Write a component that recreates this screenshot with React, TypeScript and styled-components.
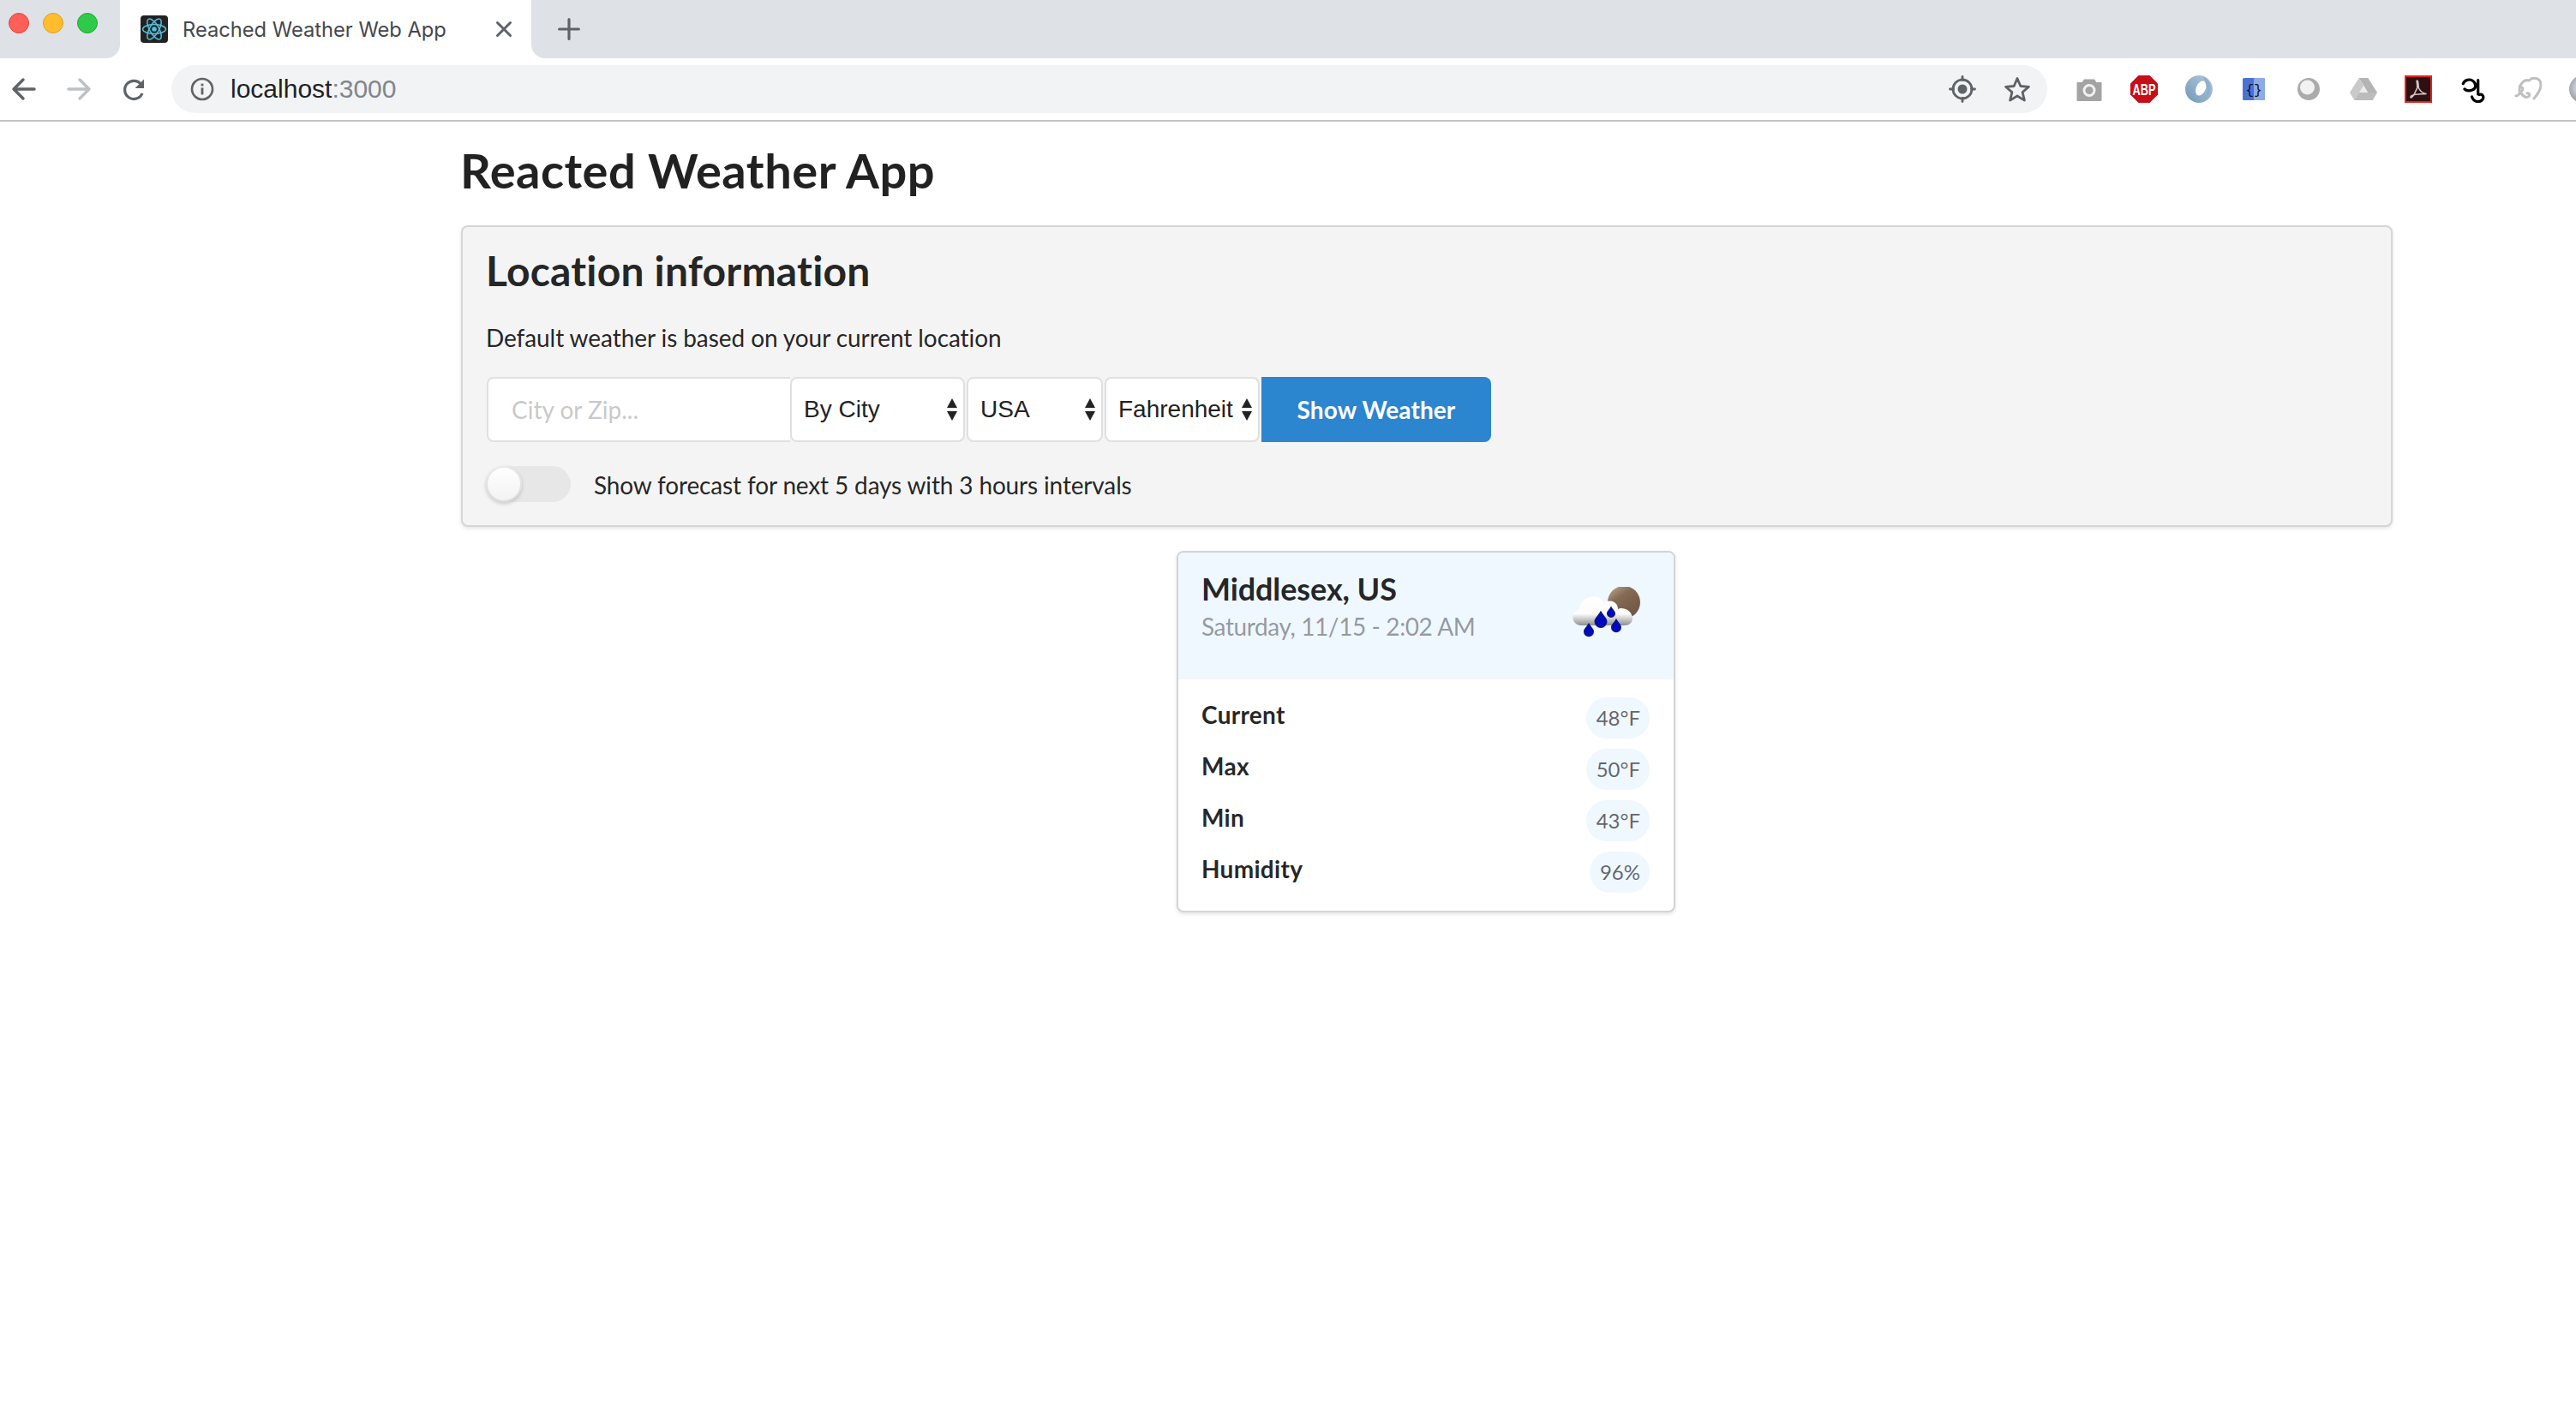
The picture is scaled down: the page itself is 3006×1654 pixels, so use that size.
import React from 'react';
import styled, { createGlobalStyle } from 'styled-components';

const GlobalStyle = createGlobalStyle`
	html, body {
		margin: 0;
		padding: 0;
		background: #ffffff;
		overflow: hidden;
	}
	* {
		box-sizing: border-box;
	}
`;

const Page = styled.div`
	width: 3006px;
	height: 1654px;
	overflow: hidden;
	background: #ffffff;
	font-family: Lato, "Open Sans", sans-serif;
	color: rgba(0, 0, 0, 0.87);
`;

const TabStrip = styled.div`
	display: flex;
	height: 68px;
`;

const WindowControls = styled.div`
	display: flex;
	flex: none;
	width: 140px;
	gap: 16px;
	padding: 15px 0 0 10px;
	background: #dee1e6;
	border-bottom-right-radius: 16px;
`;

const Light = styled.span<{ $fill: string; $edge: string }>`
	width: 24px;
	height: 24px;
	border-radius: 50%;
	background: ${p => p.$fill};
	border: 1px solid ${p => p.$edge};
`;

const Tab = styled.div`
	display: flex;
	flex: none;
	align-items: center;
	width: 480px;
	padding: 0 20px 0 24px;
	background: #ffffff;
	border-radius: 16px 16px 0 0;
`;

const TabTitle = styled.span`
	margin-left: 17px;
	font-family: Inter, "Liberation Sans", sans-serif;
	font-size: 23.7px;
	color: #45474b;
	white-space: nowrap;
	flex: 1;
`;

const StripFill = styled.div`
	display: flex;
	flex: 1;
	align-items: center;
	padding-left: 30px;
	background: #dee1e6;
	border-bottom-left-radius: 16px;
`;

const Toolbar = styled.div`
	display: flex;
	align-items: center;
	height: 74px;
	padding-left: 12px;
	border-bottom: 2px solid #c4c4c4;
`;

const NavIcons = styled.div`
	display: flex;
	flex: none;
	gap: 32px;
	& > svg:last-child {
		margin-left: 1px;
	}
`;

const Omnibox = styled.div`
	display: flex;
	flex: none;
	align-items: center;
	width: 2189px;
	height: 56px;
	margin-left: 27px;
	padding: 0 3px 0 20px;
	background: #f1f3f4;
	border-radius: 28px;
`;

const UrlText = styled.span`
	flex: 1;
	margin-left: 17px;
	font-family: "Liberation Sans", Arial, sans-serif;
	font-size: 30px;
	color: #202124;
`;

const UrlPort = styled.span`
	color: #80868b;
`;

const IconSlot = styled.div`
	display: flex;
	flex: none;
	align-items: center;
	justify-content: center;
	width: 64px;
`;

const Extensions = styled.div`
	display: flex;
	flex: none;
	margin-left: 17px;
`;

const Container = styled.main`
	width: 2254px;
	margin-left: 538px;
`;

const PageTitle = styled.h1`
	margin: 21px 0 28px -1px;
	font-size: 56px;
	font-weight: 700;
	line-height: 72px;
	letter-spacing: 0.5px;
	color: rgba(0, 0, 0, 0.87);
`;

const Segment = styled.section`
	padding: 20px 28px 27px;
	background: #f4f4f4;
	border: 2px solid #d6d6d6;
	border-radius: 8px;
	box-shadow: 0 2px 4px rgba(34, 36, 38, 0.12);
`;

const SegmentTitle = styled.h2`
	margin: 0 0 27px -1px;
	font-size: 48px;
	font-weight: 700;
	line-height: 62px;
	letter-spacing: 0.2px;
`;

const Paragraph = styled.p`
	margin: 0 0 26px -1px;
	font-size: 28px;
	line-height: 40px;
	letter-spacing: -0.08px;
`;

const InputGroup = styled.div`
	display: flex;
	height: 76px;
`;

const CityInput = styled.input`
	width: 354px;
	padding: 0 27px;
	background: #ffffff;
	border: 2px solid #e0e0e0;
	border-right: 0;
	border-radius: 8px 0 0 8px;
	font-family: Lato, sans-serif;
	font-size: 28px;
	outline: none;
	&::placeholder {
		color: rgba(191, 191, 191, 0.87);
		opacity: 1;
	}
`;

const Select = styled.div<{ $width: number }>`
	display: flex;
	align-items: center;
	justify-content: space-between;
	width: ${p => p.$width}px;
	margin-right: 2px;
	padding: 0 6px 0 14px;
	background: #ffffff;
	border: 2px solid #e0e0e0;
	border-radius: 8px;
	font-family: "Liberation Sans", Arial, sans-serif;
	font-size: 28px;
	color: #222222;
`;

const ShowButton = styled.button`
	width: 268px;
	padding: 0;
	background: #2b85cf;
	border: 0;
	border-radius: 0 8px 8px 0;
	font-family: Lato, sans-serif;
	font-size: 28px;
	font-weight: 700;
	letter-spacing: 0.1px;
	color: #ffffff;
`;

const ToggleRow = styled.div`
	display: flex;
	align-items: center;
	margin-top: 28px;
	font-size: 28px;
	line-height: 40px;
	letter-spacing: -0.15px;
`;

const Toggle = styled.span`
	position: relative;
	flex: none;
	width: 99px;
	height: 42px;
	margin: 0 27px 0 -1px;
	background: rgba(0, 0, 0, 0.05);
	border-radius: 21px;
`;

const ToggleKnob = styled.span`
	position: absolute;
	top: 0;
	left: 0;
	width: 42px;
	height: 42px;
	background: linear-gradient(transparent, rgba(0, 0, 0, 0.05)), #ffffff;
	border-radius: 50%;
	box-shadow: 0 2px 4px rgba(34, 36, 38, 0.2), 0 0 0 2px rgba(34, 36, 38, 0.1) inset;
`;

const ToggleLabel = styled.span`
	padding-top: 2px;
`;

const CardRow = styled.div`
	display: flex;
	justify-content: center;
	margin-top: 28px;
	padding-right: 2px;
`;

const Card = styled.article`
	width: 582px;
	background: #ffffff;
	border: 2px solid #d4d4d5;
	border-radius: 8px;
	box-shadow: 0 2px 4px rgba(34, 36, 38, 0.12);
	overflow: hidden;
`;

const CardHeader = styled.header`
	display: flex;
	justify-content: space-between;
	height: 148px;
	padding: 19px 33px 0 27px;
	background: #eff7ff;
	border-bottom: 2px solid #f3f6f9;
`;

const CardTitle = styled.div`
	font-size: 36px;
	font-weight: 700;
	line-height: 46px;
	letter-spacing: -0.1px;
`;

const CardMeta = styled.div`
	margin-top: 1px;
	font-size: 28px;
	line-height: 40px;
	letter-spacing: -0.4px;
	color: rgba(0, 0, 0, 0.4);
`;

const WeatherIcon = styled.svg`
	flex: none;
	margin-top: 21px;
`;

const CardBody = styled.div`
	display: flex;
	flex-direction: column;
	gap: 12px;
	padding: 21px 28px 21px 27px;
`;

const StatRow = styled.div`
	display: flex;
	justify-content: space-between;
	align-items: flex-start;
	height: 48px;
`;

const StatName = styled.span`
	font-size: 28px;
	font-weight: 700;
	line-height: 40px;
	letter-spacing: 0.3px;
`;

const StatValue = styled.span`
	height: 48px;
	padding: 0 11px 0 12px;
	background: #eff7ff;
	border-radius: 24px;
	font-size: 24px;
	line-height: 48px;
	color: rgba(0, 0, 0, 0.6);
`;

const ReactLogo = () => (
	<svg width="32" height="32" viewBox="0 0 32 32">
		<rect width="32" height="32" rx="4" fill="#222222" />
		<g fill="none" stroke="#53c1de" strokeWidth="1.5">
			<ellipse cx="16" cy="16" rx="13.5" ry="5.4" />
			<ellipse cx="16" cy="16" rx="13.5" ry="5.4" transform="rotate(60 16 16)" />
			<ellipse cx="16" cy="16" rx="13.5" ry="5.4" transform="rotate(120 16 16)" />
		</g>
		<circle cx="16" cy="16" r="2.8" fill="#53c1de" />
	</svg>
);

const Stroke = ({ d, color = '#5f6368', width = 3.4, size = 32 }: { d: string; color?: string; width?: number; size?: number }) => (
	<svg width={size} height={size} viewBox="0 0 32 32" fill="none" stroke={color} strokeWidth={width} strokeLinecap="round" strokeLinejoin="round">
		<path d={d} />
	</svg>
);

const ReloadIcon = () => (
	<svg width="32" height="32" viewBox="0 0 32 32">
		<path d="M25 21a10.6 10.6 0 1 1-1-10" fill="none" stroke="#5f6368" strokeWidth="3.2" />
		<path d="M27 4.500V15H16.500z" fill="#5f6368" />
	</svg>
);

const InfoIcon = () => (
	<svg width="32" height="32" viewBox="0 0 32 32">
		<circle cx="16" cy="16" r="12" fill="none" stroke="#5f6368" strokeWidth="2.6" />
		<rect x="14.6" y="14.4" width="2.8" height="8" fill="#5f6368" />
		<rect x="14.6" y="9.6" width="2.8" height="2.8" fill="#5f6368" />
	</svg>
);

const LocateIcon = () => (
	<svg width="32" height="32" viewBox="0 0 32 32">
		<circle cx="16" cy="16" r="11" fill="none" stroke="#5f6368" strokeWidth="2.8" />
		<circle cx="16" cy="16" r="5.5" fill="#5f6368" />
		<path d="M16 1.500v4M16 26.500v4M1.500 16h4M26.500 16h4" stroke="#5f6368" strokeWidth="2.8" strokeLinecap="round" />
	</svg>
);

const StarIcon = () => (
	<svg width="32" height="32" viewBox="0 0 32 32">
		<path d="M16 3.500l3.800 9 9.700.8-7.400 6.300 2.300 9.500-8.400-5.100-8.400 5.100 2.300-9.500-7.400-6.300 9.700-.8z" fill="none" stroke="#5f6368" strokeWidth="2.8" strokeLinejoin="round" />
	</svg>
);

const CameraIcon = () => (
	<svg width="32" height="32" viewBox="0 0 32 32">
		<path d="M2 8.500h6l2-3.500h12l2 3.500h6v21H2z" fill="#a3a3a3" stroke="#a3a3a3" strokeLinejoin="round" />
		<circle cx="16" cy="17.500" r="6" fill="none" stroke="#f1f1f1" strokeWidth="3" />
	</svg>
);

const AbpIcon = () => (
	<svg width="32" height="32" viewBox="0 0 32 32">
		<path d="M9.500 0h13L32 9.500v13L22.500 32h-13L0 22.500v-13z" fill="#c70d16" />
		<text transform="translate(16 22.500) scale(0.85 1.2)" textAnchor="middle" fontFamily="Liberation Sans" fontWeight="700" fontSize="15" fill="#ffffff">ABP</text>
	</svg>
);

const RingIcon = () => (
	<svg width="32" height="32" viewBox="0 0 32 32">
		<defs>
			<linearGradient id="ring" x1="0" y1="1" x2="1" y2="0">
				<stop offset="0" stopColor="#6f97ba" />
				<stop offset="1" stopColor="#b7cbdc" />
			</linearGradient>
		</defs>
		<circle cx="16" cy="16" r="16" fill="url(#ring)" />
		<ellipse cx="18.300" cy="15" rx="5.500" ry="9" transform="rotate(25 18.300 15)" fill="#ffffff" />
		<path d="M20 1c8 3 11 11 9 18-2 7-7 11-13 12 6-4 10-9 9-16-.5-6-3-11-5-14z" fill="#8fb0cb" />
	</svg>
);

const JsonIcon = () => (
	<svg width="26" height="26" viewBox="0 0 26 26">
		<rect width="26" height="26" rx="1.500" fill="#4a72d6" />
		<rect x="13" width="13" height="26" rx="1.500" fill="#8eabe6" />
		<text x="13" y="19" textAnchor="middle" fontFamily="Liberation Mono" fontSize="16" fill="#111111">{'{}'}</text>
	</svg>
);

const GreyOrbIcon = () => (
	<svg width="32" height="32" viewBox="0 0 32 32">
		<circle cx="16" cy="16" r="13" fill="#ababab" />
		<circle cx="14.500" cy="14" r="8.500" fill="#f2f2f2" />
	</svg>
);

const DriveIcon = () => (
	<svg width="32" height="32" viewBox="0 0 32 32">
		<path d="M16 12l5.300 8H10.700z" fill="#ececec" />
		<path d="M10.700 3L16 12 5.300 29 0 20z" fill="#c9c9c9" />
		<path d="M10.700 3h10.600L32 20H21.300z" fill="#b4b4b4" />
		<path d="M10.700 20H32l-5.300 9H5.300z" fill="#bcbcbc" />
	</svg>
);

const AcrobatIcon = () => (
	<svg width="32" height="32" viewBox="0 0 32 32">
		<rect x="1" y="1" width="30" height="30" fill="#2e0f12" stroke="#e2231a" strokeWidth="2" />
		<path d="M14.500 6c2 0 1 6 2 9 1.500 3 4 6 9 6.500-5 .5-13 0-17 2-1.500 1-2 2.500-1 2.500 2 0 4-4 7-11 1-3-1-9 0-9z" fill="none" stroke="#d8c5c5" strokeWidth="1.600" />
	</svg>
);

const KeyIcon = () => (
	<svg width="32" height="32" viewBox="0 0 32 32">
		<path d="M4.300 9.700C6 5 12 4 15 6 20 9 20 15 15 17 12 18 8 18 6 16M21.700 5.700V22M23 22.500C27 21 29 25 27 28 24 32 17 32 14.500 25" fill="none" stroke="#000000" strokeWidth="3.200" strokeLinecap="round" />
	</svg>
);

const ElephantIcon = () => (
	<svg width="32" height="32" viewBox="0 0 32 32">
		<path d="M2 24c4-1 5-3 4-7 0-6 5-13 11-11 5-5 14-3 14 5 0 7-5 12-8 16M6 13c3 0 5 2 3 5M8 21c3 4 6 5 8 4 3-1 2-5-1-4" fill="none" stroke="#bfbfbf" strokeWidth="3" strokeLinecap="round" />
	</svg>
);

const SphereIcon = () => (
	<svg width="32" height="32" viewBox="0 0 32 32">
		<defs>
			<radialGradient id="sphere" cx="0.45" cy="0.45" r="0.6">
				<stop offset="0" stopColor="#eef0f4" />
				<stop offset="1" stopColor="#8b8f96" />
			</radialGradient>
		</defs>
		<circle cx="16" cy="16" r="16" fill="url(#sphere)" />
	</svg>
);

const SelectArrows = () => (
	<svg width="14" height="26" viewBox="0 0 14 26">
		<path d="M7 0l6 11H1zM7 26L1 15h12z" fill="#222222" />
	</svg>
);

const Drop = ({ x, y, s }: { x: number; y: number; s: number }) => (
	<path d={`M${x} ${y - s * 1.5}C${x + s * 0.5} ${y - s * 0.6} ${x + s} ${y - s * 0.3} ${x + s} ${y + s * 0.2}A${s} ${s} 0 0 1 ${x - s} ${y + s * 0.2}C${x - s} ${y - s * 0.3} ${x - s * 0.5} ${y - s * 0.6} ${x} ${y - s * 1.5}z`} fill="url(#drop)" />
);

const RainCloud = () => (
	<WeatherIcon width="90" height="80" viewBox="0 0 90 80">
		<defs>
			<linearGradient id="sun" x1="0" y1="0" x2="0.7" y2="1">
				<stop offset="0" stopColor="#c4ae9b" />
				<stop offset="0.4" stopColor="#856a55" />
				<stop offset="1" stopColor="#6f5643" />
			</linearGradient>
			<linearGradient id="cloud" x1="0" y1="0" x2="0" y2="1">
				<stop offset="0" stopColor="#ffffff" />
				<stop offset="0.6" stopColor="#fbfbfb" />
				<stop offset="1" stopColor="#8f8f8f" />
			</linearGradient>
			<radialGradient id="drop" cx="0.5" cy="0.6" r="0.6">
				<stop offset="0" stopColor="#0000e0" />
				<stop offset="1" stopColor="#0a1a70" />
			</radialGradient>
			<filter id="soft" x="-10%" y="-10%" width="120%" height="120%">
				<feGaussianBlur stdDeviation="0.5" />
			</filter>
		</defs>
		<g filter="url(#soft)">
			<circle cx="65" cy="18" r="19" fill="url(#sun)" />
			<path d="M15 45C3 45 2 28 13 26 15 12 34 5 42 19 48 14 58 17 58 26 62 23 74 26 75 36 75 42 71 45 66 45z" fill="url(#cloud)" />
			<Drop x={24} y={51} s={6} />
			<Drop x={38} y={39} s={7.500} />
			<Drop x={50} y={30} s={5} />
			<Drop x={56} y={46} s={6} />
		</g>
	</WeatherIcon>
);

const stats = [
	{ name: 'Current', value: '48°F' },
	{ name: 'Max', value: '50°F' },
	{ name: 'Min', value: '43°F' },
	{ name: 'Humidity', value: '96%' },
];

const extensions = [
	<CameraIcon key="camera" />,
	<AbpIcon key="abp" />,
	<RingIcon key="ring" />,
	<JsonIcon key="json" />,
	<GreyOrbIcon key="orb" />,
	<DriveIcon key="drive" />,
	<AcrobatIcon key="acrobat" />,
	<KeyIcon key="key" />,
	<ElephantIcon key="elephant" />,
	<SphereIcon key="sphere" />,
];

const App = () => (
	<Page>
		<GlobalStyle />
		<TabStrip>
			<WindowControls>
				<Light $fill="#ff5f57" $edge="#e0443e" />
				<Light $fill="#ffbd2e" $edge="#dea123" />
				<Light $fill="#2fca49" $edge="#1fa935" />
			</WindowControls>
			<Tab>
				<ReactLogo />
				<TabTitle>Reached Weather Web App</TabTitle>
				<Stroke size={24} width={4} d="M6 6l20 20M26 6L6 26" />
			</Tab>
			<StripFill>
				<Stroke size={28} width={3.6} d="M16 3v26M3 16h26" />
			</StripFill>
		</TabStrip>
		<Toolbar>
			<NavIcons>
				<Stroke d="M28 16H5M15 5L4 16l11 11" />
				<Stroke color="#bdc1c6" d="M4 16h23M17 5l11 11-11 11" />
				<ReloadIcon />
			</NavIcons>
			<Omnibox>
				<InfoIcon />
				<UrlText>
					localhost<UrlPort>:3000</UrlPort>
				</UrlText>
				<IconSlot><LocateIcon /></IconSlot>
				<IconSlot><StarIcon /></IconSlot>
			</Omnibox>
			<Extensions>
				{extensions.map(icon => (
					<IconSlot key={icon.key}>{icon}</IconSlot>
				))}
			</Extensions>
		</Toolbar>
		<Container>
			<PageTitle>Reacted Weather App</PageTitle>
			<Segment>
				<SegmentTitle>Location information</SegmentTitle>
				<Paragraph>Default weather is based on your current location</Paragraph>
				<InputGroup>
					<CityInput placeholder="City or Zip..." />
					<Select $width={204}>By City<SelectArrows /></Select>
					<Select $width={159}>USA<SelectArrows /></Select>
					<Select $width={181}>Fahrenheit<SelectArrows /></Select>
					<ShowButton>Show Weather</ShowButton>
				</InputGroup>
				<ToggleRow>
					<Toggle><ToggleKnob /></Toggle>
					<ToggleLabel>Show forecast for next 5 days with 3 hours intervals</ToggleLabel>
				</ToggleRow>
			</Segment>
			<CardRow>
				<Card>
					<CardHeader>
						<div>
							<CardTitle>Middlesex, US</CardTitle>
							<CardMeta>Saturday, 11/15 - 2:02 AM</CardMeta>
						</div>
						<RainCloud />
					</CardHeader>
					<CardBody>
						{stats.map(stat => (
							<StatRow key={stat.name}>
								<StatName>{stat.name}</StatName>
								<StatValue>{stat.value}</StatValue>
							</StatRow>
						))}
					</CardBody>
				</Card>
			</CardRow>
		</Container>
	</Page>
);

export default App;
